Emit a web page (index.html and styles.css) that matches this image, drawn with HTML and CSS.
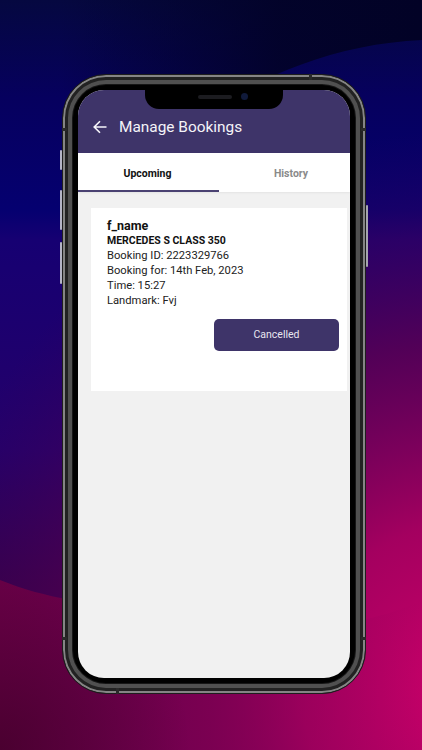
FILE: index.html
```html
<!DOCTYPE html>
<html lang="en">
<head>
<meta charset="utf-8">
<title>Manage Bookings</title>
<link rel="stylesheet" href="styles.css">
</head>
<body>
<main class="stage">
  <svg class="backdrop" viewBox="0 0 422 750" preserveAspectRatio="none" aria-hidden="true">
    <defs>
      <linearGradient id="base" x1="0" y1="0" x2="0" y2="1">
        <stop offset="0" stop-color="#050840"/>
        <stop offset="0.13" stop-color="#06005e"/>
        <stop offset="0.28" stop-color="#050070"/>
        <stop offset="0.32" stop-color="#160072"/>
        <stop offset="0.6" stop-color="#25006a"/>
        <stop offset="0.78" stop-color="#34004c"/>
        <stop offset="1" stop-color="#34004c"/>
      </linearGradient>
      <linearGradient id="top" gradientUnits="userSpaceOnUse" x1="60" y1="0" x2="422" y2="0">
        <stop offset="0" stop-color="#020226" stop-opacity="0"/>
        <stop offset="0.6" stop-color="#020226" stop-opacity="0.85"/>
        <stop offset="1" stop-color="#020226"/>
      </linearGradient>
      <radialGradient id="glow" gradientUnits="userSpaceOnUse" cx="470" cy="690" r="560">
        <stop offset="0" stop-color="#cc006a"/>
        <stop offset="0.3" stop-color="#aa0060" stop-opacity="0.95"/>
        <stop offset="0.62" stop-color="#640050" stop-opacity="0.75"/>
        <stop offset="1" stop-color="#3a0055" stop-opacity="0"/>
      </radialGradient>
      <linearGradient id="low" gradientUnits="userSpaceOnUse" x1="0" y1="0" x2="422" y2="0">
        <stop offset="0" stop-color="#6a0048"/>
        <stop offset="0.5" stop-color="#7c0050" stop-opacity="0.7"/>
        <stop offset="1" stop-color="#a00060" stop-opacity="0"/>
      </linearGradient>
      <radialGradient id="corner" gradientUnits="userSpaceOnUse" cx="0" cy="750" r="190">
        <stop offset="0" stop-color="#2a0018" stop-opacity="0.5"/>
        <stop offset="1" stop-color="#2a0018" stop-opacity="0"/>
      </radialGradient>
    </defs>
    <rect width="422" height="750" fill="url(#base)"/>
    <path d="M0 0H422V40C380 42 340 50 300 65C270 76 240 92 200 110C130 110 60 90 0 70Z" fill="url(#top)"/>
    <rect width="422" height="750" fill="url(#glow)"/>
    <path d="M0 580C25 590 45 595 70 600C200 640 340 640 422 600V750H0Z" fill="url(#low)"/>
    <path d="M0 560H200V750H0Z" fill="url(#corner)" clip-path="url(#lowclip)"/>
    <clipPath id="lowclip"><path d="M0 580C25 590 45 595 70 600C200 640 340 640 422 600V750H0Z"/></clipPath>
  </svg>
  <div class="phone">
    <span class="key key-mute"></span>
    <span class="key key-up"></span>
    <span class="key key-down"></span>
    <span class="key key-power"></span>
    <div class="rim">
      <span class="seam seam-top"></span>
      <span class="seam seam-bottom"></span>
      <span class="seam seam-left-top"></span>
      <span class="seam seam-right-top"></span>
      <span class="seam seam-left-bottom"></span>
      <span class="seam seam-right-bottom"></span>
      <div class="screen">
        <div class="notch"><span class="speaker"></span><span class="camera"></span></div>
        <header class="appbar">
          <svg class="back" viewBox="0 0 14 14" aria-hidden="true"><path d="M13.5 7H1.5M7 1.2 1.2 7 7 12.8" fill="none" stroke="#f6f5fa" stroke-width="1.6"/></svg>
          <h1 class="title">Manage Bookings</h1>
        </header>
        <nav class="tabs">
          <div class="tab tab-active">Upcoming</div>
          <div class="tab">History</div>
        </nav>
        <section class="content">
          <article class="card">
            <h2 class="name">f_name</h2>
            <p class="model">MERCEDES S CLASS 350</p>
            <p class="line">Booking ID: 2223329766</p>
            <p class="line">Booking for: 14th Feb, 2023</p>
            <p class="line">Time: 15:27</p>
            <p class="line">Landmark: Fvj</p>
            <div class="actions"><button class="status">Cancelled</button></div>
          </article>
        </section>
      </div>
    </div>
  </div>
</main>
</body>
</html>
```
FILE: styles.css
```css
* { box-sizing: border-box; }
html, body { margin: 0; height: 100%; }
body { font-family: Roboto, "Liberation Sans", sans-serif; overflow: hidden; }
.stage { position: relative; width: 422px; height: 750px; padding: 74px 56px 56px 62px; overflow: hidden; }
.backdrop { position: absolute; inset: 0; width: 100%; height: 100%; }
.phone { position: relative; width: 304px; height: 620px; }
.key { position: absolute; width: 2px; background: #b4b4c6; border-radius: 1px; }
.key-mute { left: -2px; top: 76px; height: 20px; }
.key-up { left: -2px; top: 116px; height: 40px; }
.key-down { left: -2px; top: 168px; height: 42px; }
.key-power { right: -2px; top: 131px; height: 62px; background: #a5a5ad; }
.rim {
  position: relative;
  height: 100%;
  padding: 15px;
  border-radius: 44px;
  background: #000;
  border: 1px solid #1e1e1e;
  box-shadow: inset 0 0 0 2px #858585, inset 0 0 0 5px #222, inset 0 0 0 9px #505050, inset 0 0 0 10px #161616;
}
.seam { position: absolute; background: #2a2a2a; }
.seam-top { top: -1px; left: 246px; width: 3px; height: 6px; }
.seam-bottom { bottom: -1px; left: 53px; width: 3px; height: 6px; }
.seam-left-top { left: -1px; top: 53px; width: 5px; height: 3px; }
.seam-right-top { right: -1px; top: 53px; width: 5px; height: 3px; }
.seam-left-bottom { left: -1px; top: 562px; width: 5px; height: 3px; }
.seam-right-bottom { right: -1px; top: 562px; width: 5px; height: 3px; }
.screen { position: relative; height: 100%; border-radius: 26px; overflow: hidden; background: #f1f1f1; display: flex; flex-direction: column; }
.notch {
  position: absolute; top: 0; left: 50%; width: 138px; height: 19px; margin-left: -69px;
  background: #000; border-radius: 0 0 14px 14px;
  display: flex; align-items: center; justify-content: center; gap: 9px; padding: 0 0 6px 17px;
}
.speaker { width: 34px; height: 4px; border-radius: 2px; background: #1c1c20; }
.camera { width: 7px; height: 7px; border-radius: 50%; background: #101a3a; }
.appbar { height: 63px; flex: none; background: #3e3469; display: flex; align-items: center; padding: 11px 0 0 15px; gap: 12px; }
.back { width: 14px; height: 14px; flex: none; }
.title { margin: 0; font-size: 15.4px; font-weight: 400; line-height: 20px; color: #f4f3f8; }
.tabs { height: 39px; flex: none; display: flex; background: #fff; box-shadow: 0 1px 2px rgba(0,0,0,.06); }
.tab { width: 144px; flex: none; padding-top: 14px; font-size: 10.5px; font-weight: 700; line-height: 13px; color: #8a8a8a; text-align: center; }
.tab-active { width: 141px; padding-right: 2px; color: #111; border-bottom: 2px solid #4a4272; }
.content { flex: 1; padding: 16px 3px 0 13px; }
.card { height: 183px; background: #fff; padding: 10px 8px 0 16px; color: #222; }
.name { margin: 0; font-size: 12.5px; font-weight: 700; line-height: 16px; color: #111; }
.model { margin: 0; font-size: 10.5px; font-weight: 700; line-height: 14px; color: #111; }
.line { margin: 0; font-size: 11.2px; font-weight: 400; line-height: 15px; }
.actions { display: flex; justify-content: flex-end; margin-top: 11px; }
.status { width: 125px; height: 32px; border: 0; border-radius: 5px; background: #3e3469; color: #e8e6f0; font: 400 10.5px/1 Roboto, "Liberation Sans", sans-serif; }
```
